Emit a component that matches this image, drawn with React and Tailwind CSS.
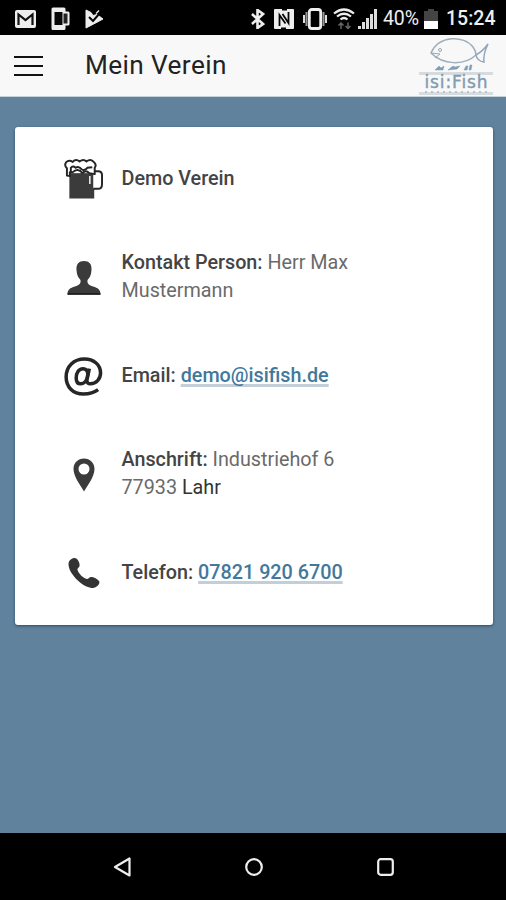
import React from 'react';

const StatusBar = () => (
  <div className="flex h-[35px] items-center bg-black pl-[15px] pr-[10px] pt-[2px] text-[#eee]">
    <svg width="21" height="18" viewBox="0 0 21 18">
      <rect width="21" height="18" rx="2" fill="#eee" />
      <path d="M3.5 15V4.5l7 5.5 7-5.5V15" fill="none" stroke="#111" strokeWidth="2.2" />
    </svg>
    <svg className="ml-[15px]" width="19" height="24" viewBox="0 0 19 24">
      <path d="M2 .5h11a1.5 1.5 0 0 1 1.500 1.500v2.500h2.500a1.500 1.500 0 0 1 1.500 1.500v11a1.500 1.500 0 0 1-1.500 1.500h-2.500v3a1.500 1.500 0 0 1-1.500 1.500H2A1.500 1.500 0 0 1 .5 21.500V2A1.500 1.500 0 0 1 2 .5z" fill="#eee" />
      <path d="M3.500 5h8v13h-8z" fill="#080808" />
      <path d="M12.500 6.500h4v10h-4z" fill="#222" />
    </svg>
    <svg className="ml-[15px]" width="19" height="20" viewBox="0 0 19 20">
      <path d="M1 1l5 2.500 2 3 4-1 6 4.500L1 19z" fill="#eee" stroke="#eee" strokeLinejoin="round" />
      <path d="M4 8l4 4 6.500-7.500" fill="none" stroke="#080808" strokeWidth="2" />
      <path d="M11 4.500l3-3" stroke="#eee" strokeWidth="1.500" />
    </svg>

    <div className="ml-auto flex items-center">
      <svg width="14" height="20" viewBox="0 0 14 20">
        <path d="M1 5l11 10-5.500 4V1L12 5 1 15" fill="none" stroke="#eee" strokeWidth="2.600" />
      </svg>
      <svg className="ml-[9px]" width="20" height="20" viewBox="0 0 20 20">
        <rect y="0" width="20" height="20" rx="1" fill="#eee" />
        <path d="M5.500 17V6l6 8.500M14.500 3v11L8.500 5" fill="none" stroke="#050505" strokeWidth="1.800" />
        <path d="M8 0l5 0M7 20l5 0" stroke="#050505" strokeWidth="3" />
      </svg>
      <svg className="ml-[9px]" width="24" height="22" viewBox="0 0 24 22">
        <rect x="6.300" y="1.500" width="11.400" height="19" rx="2.500" fill="none" stroke="#eee" strokeWidth="2.800" />
        <path d="M3.500 4v14M20.500 4v14" stroke="#999" strokeWidth="2" />
        <path d="M1 7v8M23 7v8" stroke="#ddd" strokeWidth="2" />
      </svg>
      <svg className="ml-[6px]" width="22" height="22" viewBox="0 0 22 22">
        <path d="M1 5.500Q11-2.500 21 5.500M4 8.500Q11 3 18 8.500M7.500 11.500Q11 8.500 14.500 11.500" fill="none" stroke="#eee" strokeWidth="2.200" />
        <path d="M8 21v-6M5.500 17.500L8 15l2.500 2.500M15 14.500v6M12.500 18l2.500 2.500 2.500-2.500" fill="none" stroke="#666" strokeWidth="1.500" />
      </svg>
      <svg className="ml-[3px]" width="20" height="20" viewBox="0 0 20 20">
        <path d="M1.500 17v3M5.500 13v7M9.500 9v11M13.500 5v15M17.500 0v20" stroke="#ddd" strokeWidth="3" />
      </svg>
      <span className="ml-[5px] w-[37px] whitespace-nowrap text-[19.5px] leading-none tracking-[-0.1px]">40%</span>
      <svg className="ml-[4px]" width="14" height="20" viewBox="0 0 14 20">
        <path d="M0 2h4V0h6v2h4v10H0z" fill="#444" />
        <path d="M0 12h14v8H0z" fill="#fff" />
      </svg>
      <span className="ml-[8px] w-[50px] whitespace-nowrap pt-px text-[19.5px] font-medium leading-none">15:24</span>
    </div>
  </div>
);

const Logo = () => (
  <div className="flex h-[60px] w-[74px] flex-col items-center">
    <svg className="shrink-0" width="74" height="36" viewBox="0 0 74 36" fill="none">
      <path d="M12 17C20-1 45-1 54 11Q57 15 57 19C45 30 24 29 12 17z" stroke="#9eaebb" strokeWidth="1.500" />
      <path d="M57 19Q64 15 69 8Q64 18 65 26Q58 25 57 19" stroke="#91a5bb" strokeWidth="1.500" />
      <path d="M12 17l9 1-5 4" stroke="#9aa7b3" />
      <circle cx="21" cy="14" r="1.500" stroke="#9aa7b3" />
      <path d="M16 34l4-4 2 2 3-2-1 4zM29 34l5-4 2 1 5-1-3 3zM45 34l2-4h2l-1 4zM50 34l1-5h2l-1 5z" fill="#7f9db6" stroke="#7f9db6" strokeWidth="0.500" />
    </svg>
    <div className="flex h-[19px] w-full items-center justify-center border-t-[3px] border-[#d5dbdf] text-[17px] leading-none tracking-[0.9px] text-[#829bb1] [-webkit-text-stroke:0.4px_#829bb1] [font-family:'DejaVu_Sans',sans-serif]">
      <span className="mr-[-0.9px] whitespace-nowrap">isi:Fish</span>
    </div>
    <svg className="shrink-0" width="74" height="4" viewBox="0 0 74 4">
      <path d="M0 2.500h74" stroke="#d5dbdf" strokeWidth="3" />
      <path d="M6 1h62" stroke="#b9c5ce" strokeWidth="2" strokeDasharray="2 4" />
    </svg>
  </div>
);

const Header = () => (
  <header className="flex h-[62px] items-center border-b border-[#c5d0d8] bg-[#f8f8f8] pl-[14px] pr-[13px]">
    <button type="button" aria-label="Menu" className="flex w-[29px] flex-col gap-[7px] pt-px">
      <span className="h-[2px] w-full bg-[#111]" />
      <span className="h-[2px] w-full bg-[#111]" />
      <span className="h-[2px] w-full bg-[#111]" />
    </button>
    <h1 className="ml-[42px] text-[26.2px] leading-none tracking-[0.4px] text-[#222]">Mein Verein</h1>
    <div className="ml-auto">
      <Logo />
    </div>
  </header>
);

const BeerIcon = () => (
  <svg width="40" height="42" viewBox="0 0 40 42">
    <path d="M5.500 15h25.500v26H5.500z" fill="#3b3b3b" />
    <path d="M30 13h5q4 0 4 4v9q0 5-4 5h-5" fill="#fff" stroke="#252525" strokeWidth="2" />
    <path d="M3 17.500V10Q0 7 2 4Q5 1 9 3.500Q12 0 16 3Q20 0 23 3Q27 0 30 3Q34 6 31.500 9.500V16L26 15Q22 11 19 15Q14 9 9 14L6 14V18z" fill="#fff" stroke="#252525" strokeWidth="2" strokeLinejoin="round" />
    <path d="M7 14V9.500Q9 7 12 9.500Q15 7.500 18 11Q21 13 24 9.500L29 9" fill="none" stroke="#252525" strokeWidth="2" />
    <path d="M26.500 18v8" stroke="#eee" strokeWidth="1.600" />
  </svg>
);

const PersonIcon = () => (
  <svg width="34" height="34" viewBox="0 0 34 34">
    <path d="M17 0C22 0 25 3 24.500 9C24.300 14 22.500 17 20.500 19C20 23 22 24 26 25.500C31 27 33.500 28.500 33.500 33.500H.5C.5 28.500 3 27 8 25.500C12 24 14 23 13.500 19C11.500 17 9.700 14 9.500 9C9 3 12 0 17 0z" fill="#3b3b3b" />
    <path d="M.5 33h33" stroke="#161616" strokeWidth="1.500" />
  </svg>
);

const AtIcon = () => (
  <svg width="40" height="41" viewBox="0 0 40 41" fill="none" stroke="#262626" strokeWidth="3.600">
    <path d="M26 12.500L23.500 24Q23.300 28 27 28C33 28 37.500 23 37.500 17C37.500 8 30 2.500 21 2.500C10 2.500 2.200 10 2.200 21C2.200 31 9 38.500 20 38.500Q29 38.500 35 34" />
    <path d="M24.500 18Q24 12.500 19.500 12.500C15 12.500 12.500 17 12.500 22Q12.500 28 17 28C21.500 28 24 23 24.500 18z" />
  </svg>
);

const PinIcon = () => (
  <svg width="22" height="34" viewBox="0 0 22 34">
    <path fillRule="evenodd" d="M11 .5C5 .5.500 5 .5 11C.5 19 8 28 11 33.500C14 28 21.500 19 21.500 11C21.500 5 17 .5 11 .5zM11 5.500a5.500 5.500 0 1 1 0 11a5.500 5.500 0 0 1 0-11z" fill="#3b3b3b" />
  </svg>
);

const PhoneIcon = () => (
  <svg width="32" height="32" viewBox="0 0 32 32">
    <path d="M1 4.500C3 1 7 0 9 2C11 4.500 12 7 11.500 9C11 11 9 11 9.500 13C11 17 15 21 19 22C21 22 21 19.500 24 20C27 20.500 31 23 31.500 25C31 29 27 31 23.500 31C16 30 8 23 3.500 16C.5 11 0 7 1 4.500z" fill="#333" />
  </svg>
);

const Row = ({ icon, children }) => (
  <div className="flex h-[98.5px] items-center">
    <div className="flex w-[39px] shrink-0 justify-center">{icon}</div>
    <div className="ml-[18.5px] w-[270px] pb-px text-[19.75px] leading-[28px] text-[#6a6a6a]">{children}</div>
  </div>
);

const Label = ({ children }) => <span className="font-medium text-[#444]">{children}</span>;

const Link = ({ href, children }) => (
  <a href={href} className="font-medium text-[#42789c] underline decoration-[#c3ced9] decoration-[3px] underline-offset-[2px] [text-decoration-skip-ink:none]">
    {children}
  </a>
);

const NavBar = () => (
  <nav className="flex h-[67px] items-center justify-between bg-black pl-[113px] pr-[112px]">
    <svg width="18" height="20" viewBox="0 0 18 20" fill="none" stroke="#eee" strokeWidth="2.200">
      <path d="M16.500 1.500v17L2 10z" strokeLinejoin="round" />
    </svg>
    <svg width="18" height="18" viewBox="0 0 18 18" fill="none" stroke="#eee" strokeWidth="2.200">
      <circle cx="9" cy="9" r="7.800" />
    </svg>
    <svg width="17" height="18" viewBox="0 0 17 18" fill="none" stroke="#eee" strokeWidth="2.200">
      <rect x="1.200" y="1.200" width="14.600" height="15.600" rx="2.500" />
    </svg>
  </nav>
);

export default function App() {
  return (
    <div className="flex h-[900px] w-[506px] flex-col overflow-hidden bg-[#60829d] [font-family:Roboto,sans-serif]">
      <StatusBar />
      <Header />
      <main className="flex-1 pl-[15px] pr-[13px] pt-[30px]">
        <section className="h-[498px] rounded-[3px] bg-white pl-[49px] pt-[3px] shadow-[0_1px_3px_#284c68]">
          <Row icon={<BeerIcon />}>
            <Label>Demo Verein</Label>
          </Row>
          <Row icon={<PersonIcon />}>
            <Label>Kontakt Person:</Label> Herr Max
            <br />
            Mustermann
          </Row>
          <Row icon={<AtIcon />}>
            <Label>Email:</Label> <Link href="mailto:demo@isifish.de">demo@isifish.de</Link>
          </Row>
          <Row icon={<PinIcon />}>
            <Label>Anschrift:</Label> Industriehof 6
            <br />
            77933 <span className="text-[#333]">Lahr</span>
          </Row>
          <Row icon={<PhoneIcon />}>
            <Label>Telefon:</Label> <Link href="tel:078219206700">07821 920 6700</Link>
          </Row>
        </section>
      </main>
      <NavBar />
    </div>
  );
}
